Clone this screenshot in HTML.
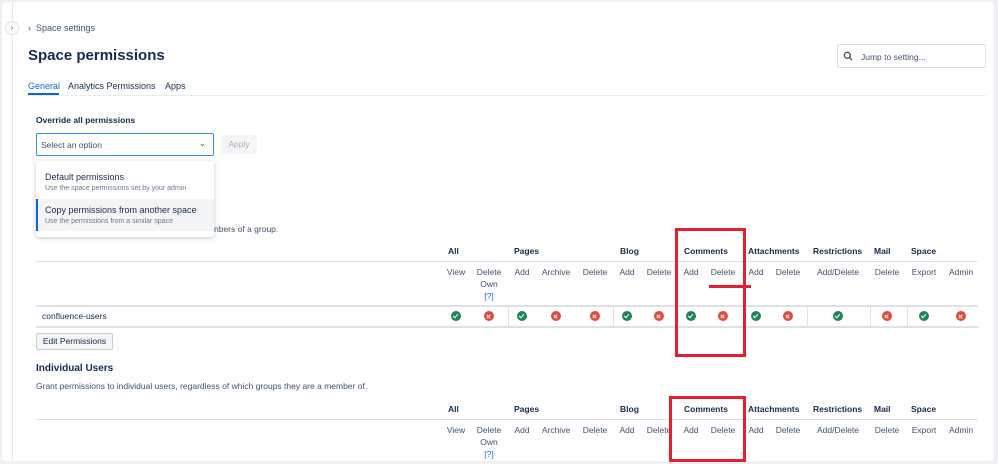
<!DOCTYPE html>
<html><head><meta charset="utf-8"><style>
*{margin:0;padding:0;box-sizing:border-box}
body{width:998px;height:464px;background:#eef0f3;font-family:"Liberation Sans",sans-serif;position:relative;overflow:hidden;color:#172b4d}
.a{position:absolute;white-space:nowrap}
.frame{position:absolute;left:2px;top:2px;width:992px;height:459px;background:#fff;border-radius:3px}
.side{position:absolute;left:12px;top:2px;width:1px;height:459px;background:#e4e6ea}
.t{font-size:8.5px;color:#42526e}
.h{font-size:8.5px;font-weight:bold;color:#172b4d}
.c{transform:translateX(-50%);text-align:center}
.line{position:absolute;height:1px;background:#dfe1e6}
.ok,.no{position:absolute;width:10px;height:10px;border-radius:50%;transform:translate(-50%,-50%)}
.ok{background:#1f845a}.no{background:#e34935}
.ok:after{content:"";position:absolute;left:3px;top:2px;width:2px;height:4px;border:solid #fff;border-width:0 1.3px 1.3px 0;transform:rotate(40deg)}
.no:before,.no:after{content:"";position:absolute;left:4.4px;top:2.5px;width:1.3px;height:5px;background:#fff;transform:rotate(45deg)}
.no:after{transform:rotate(-45deg)}
.vs{position:absolute;width:1px;background:#dfe1e6}
.red{position:absolute;border:3px solid #e5202e}
</style></head><body>
<div class="frame"></div><div class="side"></div>
<div class="a" style="left:5px;top:21px;width:14px;height:14px;border-radius:50%;background:#fff;border:1px solid #dfe1e6;font-size:8px;text-align:center;line-height:12px;color:#42526e">›</div>
<div class="a t" style="left:28px;top:23px;font-size:9px">‹&nbsp; Space settings</div>
<div class="a" style="left:28px;top:47px;font-size:15px;font-weight:bold">Space permissions</div>
<div class="a" style="left:837px;top:44px;width:149px;height:24px;border:1px solid #dfe1e6;border-radius:2px"></div>
<svg class="a" style="left:843px;top:51px" width="10" height="10"><circle cx="4.3" cy="4.3" r="3" fill="none" stroke="#42526e" stroke-width="1.3"/><line x1="6.5" y1="6.5" x2="9" y2="9" stroke="#42526e" stroke-width="1.3"/></svg>
<div class="a t" style="left:861px;top:52px">Jump to setting...</div>
<div class="a" style="left:28px;top:81px;font-size:9px;color:#0c66e4">General</div>
<div class="a" style="left:28px;top:93px;width:31px;height:2px;background:#0c66e4"></div>
<div class="a" style="left:68px;top:81px;font-size:9px">Analytics Permissions</div>
<div class="a" style="left:165px;top:81px;font-size:9px">Apps</div>
<div class="line" style="left:28px;top:95px;width:958px;background:#ebecf0"></div>
<div class="a h" style="left:36px;top:115px">Override all permissions</div>
<div class="a" style="left:36px;top:133px;width:178px;height:23px;border:1.5px solid #388bff;border-radius:2px"></div>
<div class="a t" style="left:41px;top:140px">Select an option</div>
<div class="a t" style="left:199px;top:139px;font-size:8px">⌄</div>
<div class="a" style="left:221px;top:135px;width:36px;height:19px;background:#f4f5f7;border-radius:2px;font-size:8.5px;color:#a5adba;text-align:center;line-height:19px">Apply</div>
<div class="a" style="left:36px;top:161px;width:178px;height:76px;background:#fff;border-radius:3px;box-shadow:0 1px 4px rgba(9,30,66,.25)"></div>
<div class="a" style="left:36px;top:199px;width:178px;height:32px;background:#f4f5f7;border-left:2px solid #0c66e4"></div>
<div class="a" style="left:45px;top:172px;font-size:9px">Default permissions</div>
<div class="a" style="left:45px;top:185px;font-size:7px;color:#6b778c">Use the space permissions set by your admin</div>
<div class="a" style="left:45px;top:205px;font-size:9px">Copy permissions from another space</div>
<div class="a" style="left:45px;top:218px;font-size:7px;color:#6b778c">Use the permissions from a similar space</div>
<div class="a t" style="left:214px;top:224px">nbers of a group.</div>

<!-- table 1 -->
<div class="a h" style="left:448px;top:246px">All</div>
<div class="a h" style="left:514px;top:246px">Pages</div>
<div class="a h" style="left:620px;top:246px">Blog</div>
<div class="a h" style="left:684px;top:246px">Comments</div>
<div class="a h" style="left:748px;top:246px">Attachments</div>
<div class="a h" style="left:813px;top:246px">Restrictions</div>
<div class="a h" style="left:874px;top:246px">Mail</div>
<div class="a h" style="left:911px;top:246px">Space</div>
<div class="line" style="left:36px;top:261px;width:942px"></div>
<div id="sub1"></div>
<div class="line" style="left:36px;top:305px;width:942px;height:2px"></div>
<div class="a t" style="left:42px;top:311px;color:#172b4d">confluence-users</div>
<div class="line" style="left:36px;top:326px;width:942px;height:2px"></div>
<div class="vs" style="left:508px;top:306px;height:21px"></div><div class="vs" style="left:613px;top:306px;height:21px"></div><div class="vs" style="left:677px;top:306px;height:21px"></div><div class="vs" style="left:743px;top:306px;height:21px"></div><div class="vs" style="left:807px;top:306px;height:21px"></div><div class="vs" style="left:870px;top:306px;height:21px"></div><div class="vs" style="left:907px;top:306px;height:21px"></div>
<div class="ok" style="left:456px;top:316px"></div><div class="no" style="left:489px;top:316px"></div><div class="ok" style="left:522px;top:316px"></div><div class="no" style="left:556px;top:316px"></div><div class="no" style="left:595px;top:316px"></div><div class="ok" style="left:627px;top:316px"></div><div class="no" style="left:659px;top:316px"></div><div class="ok" style="left:691px;top:316px"></div><div class="no" style="left:723px;top:316px"></div><div class="ok" style="left:756px;top:316px"></div><div class="no" style="left:788px;top:316px"></div><div class="ok" style="left:838px;top:316px"></div><div class="no" style="left:887px;top:316px"></div><div class="ok" style="left:924px;top:316px"></div><div class="no" style="left:961px;top:316px"></div>
<div class="a" style="left:36px;top:333px;width:77px;height:17px;background:#f4f5f7;border:1px solid #ccc;border-radius:2px;font-size:8.5px;text-align:center;line-height:15px">Edit Permissions</div>
<div class="a" style="left:36px;top:363px;font-size:10px;font-weight:bold">Individual Users</div>
<div class="a t" style="left:36px;top:381px">Grant permissions to individual users, regardless of which groups they are a member of.</div>

<div class="a h" style="left:448px;top:404px">All</div>
<div class="a h" style="left:514px;top:404px">Pages</div>
<div class="a h" style="left:620px;top:404px">Blog</div>
<div class="a h" style="left:684px;top:404px">Comments</div>
<div class="a h" style="left:748px;top:404px">Attachments</div>
<div class="a h" style="left:813px;top:404px">Restrictions</div>
<div class="a h" style="left:874px;top:404px">Mail</div>
<div class="a h" style="left:911px;top:404px">Space</div>
<div class="line" style="left:36px;top:419px;width:942px"></div>

<script>
var cols=[[456,"View"],[489,"Delete"],[522,"Add"],[556,"Archive"],[595,"Delete"],[627,"Add"],[659,"Delete"],[691,"Add"],[723,"Delete"],[756,"Add"],[788,"Delete"],[838,"Add/Delete"],[887,"Delete"],[924,"Export"],[961,"Admin"]];
var h="";[267,425].forEach(function(y){cols.forEach(function(c){h+='<div class="a t c" style="left:'+c[0]+'px;top:'+y+'px">'+c[1]+'</div>';});
h+='<div class="a t c" style="left:489px;top:'+(y+12)+'px">Own</div><div class="a t c" style="left:489px;top:'+(y+24)+'px;color:#0c66e4">[?]</div>';});
document.getElementById("sub1").outerHTML=h;
</script>
<div class="red" style="left:675px;top:228px;width:71px;height:129px"></div>
<div class="a" style="left:709px;top:285px;width:42px;height:3px;background:#e5202e"></div>
<div class="red" style="left:669px;top:396px;width:77px;height:66px"></div>
</body></html>
